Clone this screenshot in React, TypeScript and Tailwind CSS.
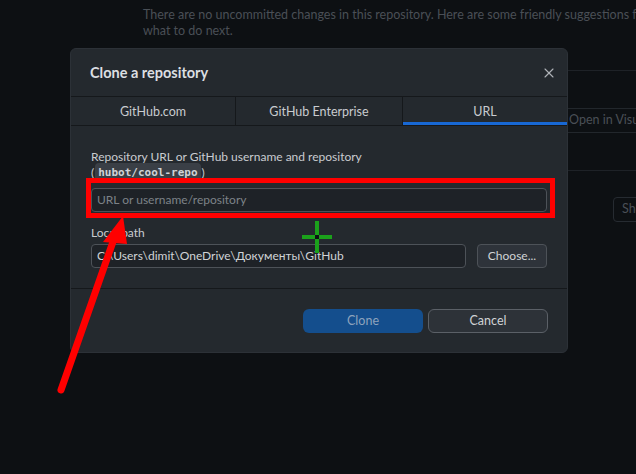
import { X } from 'lucide-react';

const font = { fontFamily: 'Lato, "Noto Sans", Arial, sans-serif' };

export default function App() {
  return (
    <div
      className="relative w-[636px] h-[474px] overflow-hidden bg-[#0d1013] text-[12px]"
      style={font}
    >
      {/* background: the "no local changes" view */}
      <div className="ml-[143px] w-[620px]">
        <p className="pt-[7px] leading-[16px] text-[12.5px] text-[#4a4f56] whitespace-nowrap">
          There are no uncommitted changes in this repository. Here are some friendly suggestions for
          <br />
          what to do next.
        </p>
        <div className="mt-[31px] border-t border-[#1e2227] h-[100px] pt-[37px]">
          <div className="ml-[415px] h-[25px] px-[10px] flex items-center whitespace-nowrap border border-[#22272c] rounded text-[12.5px] text-[#4a4f56]">
            Open in Visual Studio Code
          </div>
        </div>
        <div className="border-t border-[#1e2227] h-[78px] pt-[26px]">
          <div className="ml-[470px] h-[25px] px-[8px] flex items-center whitespace-nowrap border border-[#262b31] rounded text-[12.5px] text-[#4a4f56]">
            Show in Explorer
          </div>
        </div>
      </div>

      {/* modal */}
      <div className="absolute left-[70px] top-[48px] w-[498px] h-[305px] rounded-md bg-[#24292e] border border-[#2c3137] flex flex-col text-[#c9ccd0]">
        <div className="h-[48px] shrink-0 flex items-center justify-between pl-[19px] pr-[10px] border-b border-[#15181b]">
          <h1 className="text-[14.5px] font-bold text-[#dcdfe2]">Clone a repository</h1>
          <X size={16} strokeWidth={1.6} className="text-[#b0b4b9]" />
        </div>
        <div className="h-[29px] shrink-0 grid grid-cols-[165px_167px_1fr] border-b border-[#15181b] text-[12.5px]">
          <div className="flex items-center justify-center pt-[3px] border-r border-[#15181b]">GitHub.com</div>
          <div className="flex items-center justify-center pt-[3px] border-r border-[#15181b]">GitHub Enterprise</div>
          <div className="relative flex items-center justify-center pt-[3px]">
            URL
            <div className="absolute left-0 right-0 bottom-0 h-[3px] bg-[#1868d4]" />
          </div>
        </div>
        <div className="px-[20px] pt-[23px] pb-[20px] border-b border-[#15181b]">
          <div className="leading-[16px]">Repository URL or GitHub username and repository</div>
          <div className="leading-[16px] flex items-center">
            (
            <span
              className="mx-[1px] -my-[2px] h-[20px] px-[3px] flex items-center rounded bg-[#3a3f46] text-[11px] font-bold text-[#d0d3d6]"
              style={{ fontFamily: '"DejaVu Sans Mono", "Liberation Mono", monospace' }}
            >
              hubot/cool-repo
            </span>
            )
          </div>
          <div className="mt-[7px] h-[24px] rounded border border-[#4d5258] bg-[#1e2227] flex items-center px-[5px] text-[#7d8288]">
            URL or username/repository
          </div>
          <div className="mt-[13px] leading-[16px]">Local path</div>
          <div className="mt-[3px] flex gap-[11px]">
            <div className="flex-1 h-[24px] rounded border border-[#4d5258] bg-[#1e2227] flex items-center px-[5px] text-[#d0d3d6]">
              C:\Users\dimit\OneDrive\Документы\GitHub
            </div>
            <div className="w-[70px] h-[24px] rounded border border-[#4d5258] bg-[#2e333a] flex items-center justify-center text-[#d0d3d6]">
              Choose...
            </div>
          </div>
        </div>
        <div className="flex-1 flex justify-end items-start gap-[5px] pt-[20px] pr-[19px]">
          <div className="w-[120px] h-[24px] rounded-md bg-[#144e8d] flex items-center justify-center text-[12.5px] text-[#8ea3bc]">
            Clone
          </div>
          <div className="w-[120px] h-[24px] rounded-md border border-[#5b6067] bg-[#2d3238] flex items-center justify-center text-[12.5px] text-[#d0d3d6]">
            Cancel
          </div>
        </div>
      </div>

      {/* annotations */}
      <div className="absolute left-[86px] top-[178px] w-[469px] h-[40px] border-[5px] border-[#ff0000]" />
      <svg className="absolute inset-0 pointer-events-none" width="636" height="474">
        <line x1="61" y1="390" x2="115" y2="236" stroke="#ff0000" strokeWidth="7" strokeLinecap="round" />
        <polygon points="123,216 103,242 127,244" fill="#ff0000" />
        <rect x="302" y="235" width="30" height="4" fill="#1ba11b" />
        <rect x="315" y="221" width="4" height="32" fill="#1ba11b" />
        <rect x="315" y="235" width="4" height="4" fill="#0d1013" />
      </svg>
    </div>
  );
}
